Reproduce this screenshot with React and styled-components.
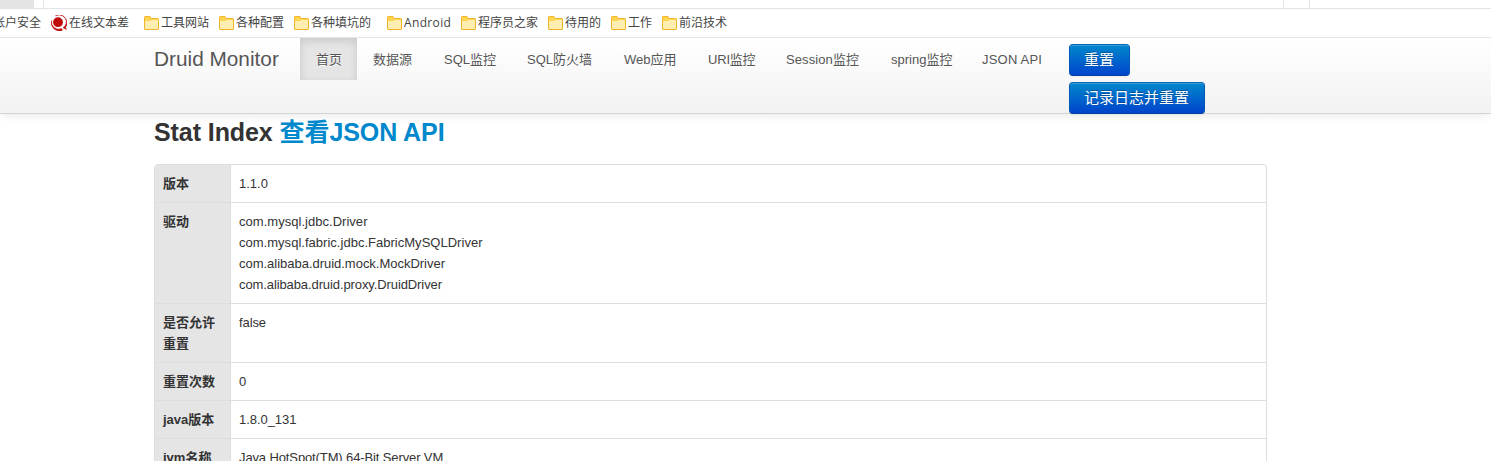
import React from "react";
import styled, { createGlobalStyle } from "styled-components";

const GlobalStyle = createGlobalStyle`
  * { box-sizing: border-box; }
  html, body { margin: 0; height: 100%; overflow: hidden; background: #fff; }
  body {
    font-family: "Liberation Sans", "Noto Sans CJK SC", sans-serif;
    font-size: 13px;
    line-height: 21px;
    color: #333;
  }
  #root { height: 461px; overflow: hidden; }
`;

const TabStrip = styled.div`
  display: flex;
  height: 9px;
  border-bottom: 1px solid #e3e4e5;
`;
const TabShade = styled.div`
  width: 34px;
  background: #e4e4e4;
`;
const TabSpace = styled.div`
  width: ${(p) => p.$w}px;
  border-right: 1px solid #e0e3e6;
`;

const Bookmarks = styled.div`
  display: flex;
  height: 29px;
  padding-bottom: 1px;
  border-bottom: 1px solid #e3e4e5;
  font-family: "Open Sans", "Noto Sans CJK SC", sans-serif;
  font-size: 12px;
  color: #444;
  overflow: hidden;
`;
const Bookmark = styled.div`
  display: flex;
  flex: none;
  align-items: center;
  gap: 2px;
  width: ${(p) => p.$w}px;
  letter-spacing: ${(p) => p.$track || 0}px;
  white-space: nowrap;
  svg { flex: none; }
`;
const ClippedBookmark = styled(Bookmark)`
  margin-left: -7px;
`;

const Navbar = styled.header`
  height: 76px;
  padding-left: 154px;
  display: flex;
  align-items: flex-start;
  background: linear-gradient(#fff, #f2f2f2);
  border-bottom: 1px solid #d4d4d4;
  box-shadow: 0 5px 7px -2px rgba(0, 0, 0, 0.07);
`;
const Brand = styled.div`
  width: 146px;
  padding-top: 11px;
  font-size: 20.8px;
  line-height: 20px;
  color: #555;
  text-shadow: 0 1px 0 #fff;
  white-space: nowrap;
`;
const NavItem = styled.a`
  width: ${(p) => p.$w}px;
  height: 42px;
  padding: 11px 0 0 16px;
  letter-spacing: ${(p) => p.$track || 0}px;
  color: #555;
  text-shadow: 0 1px 0 #fff;
  white-space: nowrap;
  background: ${(p) => (p.$active ? "#e5e5e5" : "transparent")};
  box-shadow: ${(p) => (p.$active ? "inset 0 3px 8px rgba(0, 0, 0, 0.125)" : "none")};
`;
const Actions = styled.div`
  display: flex;
  flex-direction: column;
  align-items: flex-start;
  gap: 6px;
  padding: 6px 0 0 12px;
`;
const Button = styled.button`
  width: ${(p) => p.$w}px;
  height: 32px;
  padding: 0 1px 0 0;
  border: 1px solid;
  border-color: #0067b8 #0057b5 #003f9e;
  border-radius: 4px;
  background: linear-gradient(#0088cc, #0044cc);
  box-shadow: inset 0 1px 0 rgba(255, 255, 255, 0.2), 0 1px 2px rgba(0, 0, 0, 0.05);
  color: #fff;
  font: 15px/20px "Liberation Sans", "Noto Sans CJK SC", sans-serif;
  text-shadow: 0 -1px 0 rgba(0, 0, 0, 0.25);
  white-space: nowrap;
`;

const Content = styled.main`
  width: 1113px;
  margin-left: 154px;
`;
const Title = styled.h3`
  margin: 0;
  height: 50px;
  font-size: 25px;
  line-height: 37px;
  letter-spacing: -0.08px;
  white-space: nowrap;
`;
const TitleLink = styled.a`
  color: #08c;
`;
const Table = styled.div`
  border: 1px solid #ddd;
  border-radius: 4px;
  overflow: hidden;
`;
const Row = styled.div`
  display: grid;
  grid-template-columns: 76px 1fr;
  & + & { border-top: 1px solid #ddd; }
`;
const Label = styled.div`
  padding: 8px;
  font-weight: bold;
  background: #e5e5e5;
  border-right: 1px solid #ddd;
`;
const Value = styled.div`
  padding: 8px;
  white-space: nowrap;
`;
const Line = styled.div`
  letter-spacing: ${(p) => p.$track || 0}px;
`;

const Folder = () => (
  <svg width="15" height="14" viewBox="0 0 15 14">
    <path d="M.5 13V1.2Q.5.5 1.2.5H6L7 2.5H13.8Q14.5 2.5 14.5 3.2V13Q14.5 13.5 14 13.5H1Q.5 13.5 .5 13Z" fill="#ffd654" stroke="#f1b52b" />
    <path d="M1 5H6L7.5 4H14V13H1Z" fill="#ffeeb0" />
  </svg>
);
const Logo = () => (
  <svg width="16" height="16" viewBox="0 0 16 16">
    <path d="M4.5.8A8 8 0 0 1 14.5 12.5L15.5 14.5L12 12.8A6.6 6.6 0 0 0 4.5.8Z" fill="#c00909" stroke="#c00909" strokeWidth=".5" />
    <path d="M.6 5.5A8 8 0 0 0 11.5 15.2L10.5 13.6A7.2 7.2 0 0 1 .6 5.5Z" fill="#c00909" stroke="#c00909" strokeWidth=".5" />
    <circle cx="7" cy="7.2" r="4.9" fill="#c00909" />
  </svg>
);

const folders = [
  ["工具网站", 75],
  ["各种配置", 75],
  ["各种填坑的", 93],
  ["Android", 74, 0.35],
  ["程序员之家", 87],
  ["待用的", 63],
  ["工作", 51],
  ["前沿技术", 80],
];
const nav = [
  ["首页", 57],
  ["数据源", 71],
  ["SQL监控", 83],
  ["SQL防火墙", 97],
  ["Web应用", 84],
  ["URI监控", 78, -0.2],
  ["Session监控", 105, 0.1],
  ["spring监控", 91],
  ["JSON API", 91, 0.2],
];
const stats = [
  ["版本", [["1.1.0"]]],
  ["驱动", [
    ["com.mysql.jdbc.Driver", 0.03],
    ["com.mysql.fabric.jdbc.FabricMySQLDriver", 0.02],
    ["com.alibaba.druid.mock.MockDriver", -0.02],
    ["com.alibaba.druid.proxy.DruidDriver", -0.1],
  ]],
  ["是否允许重置", [["false", -0.1]]],
  ["重置次数", [["0"]]],
  ["java版本", [["1.8.0_131", -0.05]]],
  ["jvm名称", [["Java HotSpot(TM) 64-Bit Server VM", -0.12]]],
];

export default function App() {
  return (
    <>
      <GlobalStyle />
      <TabStrip>
        <TabShade />
        <TabSpace $w={10} />
        <TabSpace $w={1240} />
        <TabSpace $w={26} />
      </TabStrip>
      <Bookmarks>
        <ClippedBookmark $w={58}>帐户安全</ClippedBookmark>
        <Bookmark $w={93}><Logo />在线文本差</Bookmark>
        {folders.map(([name, w, track]) => (
          <Bookmark key={name} $w={w} $track={track}><Folder />{name}</Bookmark>
        ))}
      </Bookmarks>
      <Navbar>
        <Brand>Druid Monitor</Brand>
        {nav.map(([name, w, track], i) => (
          <NavItem key={name} $w={w} $track={track} $active={i === 0}>{name}</NavItem>
        ))}
        <Actions>
          <Button $w={61}>重置</Button>
          <Button $w={136}>记录日志并重置</Button>
        </Actions>
      </Navbar>
      <Content>
        <Title>Stat Index <TitleLink>查看JSON API</TitleLink></Title>
        <Table>
          {stats.map(([label, lines]) => (
            <Row key={label}>
              <Label>{label}</Label>
              <Value>
                {lines.map(([text, track]) => (
                  <Line key={text} $track={track}>{text}</Line>
                ))}
              </Value>
            </Row>
          ))}
        </Table>
      </Content>
    </>
  );
}
